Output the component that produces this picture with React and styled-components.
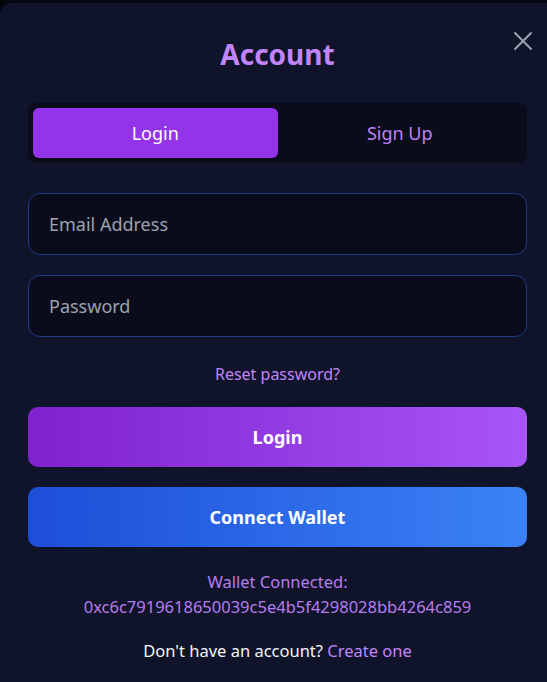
import React from "react";
import styled, { createGlobalStyle } from "styled-components";

const Global = createGlobalStyle`
  html, body { margin: 0; padding: 0; background: #05070f; overflow: hidden; }
  body { font-family: "Noto Sans", "Open Sans", sans-serif; }
  * { box-sizing: border-box; }
`;

const Modal = styled.div`
  position: relative;
  margin-top: 3px;
  width: 100%;
  min-height: 679px;
  background: #10142a;
  border-radius: 12px 0 0 0;
  padding: 33px 20px 0 28px;
  display: flex;
  flex-direction: column;
`;

const Close = styled.button`
  position: absolute;
  top: 26px;
  right: 12px;
  width: 24px;
  height: 24px;
  padding: 0;
  border: none;
  background: none;
  color: #9ca3af;
  display: flex;
  align-items: center;
  justify-content: center;
`;

const Title = styled.h2`
  margin: 0 0 31px;
  text-align: center;
  font-size: 28px;
  line-height: 36px;
  font-weight: 700;
  color: #c084fc;
`;

const Tabs = styled.div`
  display: grid;
  grid-template-columns: 1fr 1fr;
  padding: 5px;
  background: #0a0c1c;
  border-radius: 8px;
  margin-bottom: 30px;
`;

const Tab = styled.button`
  height: 50px;
  border: none;
  border-radius: 6px;
  font-family: inherit;
  font-size: 18px;
  background: ${p => (p.$active ? "#9333ea" : "transparent")};
  color: ${p => (p.$active ? "#ffffff" : "#bf80f5")};
`;

const Fields = styled.div`
  display: flex;
  flex-direction: column;
  gap: 20px;
`;

const Input = styled.input`
  height: 62px;
  width: 100%;
  padding: 0 20px;
  border: 1px solid #1e3a8a;
  border-radius: 12px;
  background: #0a0c1c;
  font-family: inherit;
  font-size: 18px;
  color: #e5e7eb;
  outline: none;
  &::placeholder { color: #9ca3af; }
`;

const Reset = styled.a`
  align-self: center;
  margin: 25px 0 21px;
  font-size: 16px;
  line-height: 24px;
  color: #c084fc;
  text-decoration: none;
`;

const Actions = styled.div`
  display: flex;
  flex-direction: column;
  gap: 20px;
`;

const Button = styled.button`
  height: 60px;
  width: 100%;
  border: none;
  border-radius: 10px;
  font-family: inherit;
  font-size: 18px;
  font-weight: 700;
  color: #ffffff;
  background: ${p =>
    p.$variant === "blue"
      ? "linear-gradient(90deg, #1d4ed8, #3b82f6)"
      : "linear-gradient(90deg, #7e22ce, #a855f7)"};
`;

const Wallet = styled.div`
  margin-top: 22px;
  text-align: center;
  font-size: 16.5px;
  line-height: 25px;
  color: #b77cf0;
`;

const Footer = styled.p`
  margin: 20px 0 0;
  text-align: center;
  font-size: 16.5px;
  line-height: 24px;
  color: #f3f4f6;
`;

const Link = styled.a`
  color: #c084fc;
  text-decoration: none;
`;

export default function App() {
  return (
    <>
      <Global />
      <Modal>
        <Close aria-label="Close">
          <svg width="20" height="20" viewBox="0 0 20 20" fill="none" stroke="currentColor" strokeWidth="2" strokeLinecap="round">
            <path d="M2 2L18 18M18 2L2 18" />
          </svg>
        </Close>
        <Title>Account</Title>
        <Tabs>
          <Tab $active>Login</Tab>
          <Tab>Sign Up</Tab>
        </Tabs>
        <Fields>
          <Input type="email" placeholder="Email Address" />
          <Input type="password" placeholder="Password" />
        </Fields>
        <Reset href="#">Reset password?</Reset>
        <Actions>
          <Button>Login</Button>
          <Button $variant="blue">Connect Wallet</Button>
        </Actions>
        <Wallet>
          Wallet Connected:
          <br />
          0xc6c7919618650039c5e4b5f4298028bb4264c859
        </Wallet>
        <Footer>
          Don't have an account? <Link href="#">Create one</Link>
        </Footer>
      </Modal>
    </>
  );
}
